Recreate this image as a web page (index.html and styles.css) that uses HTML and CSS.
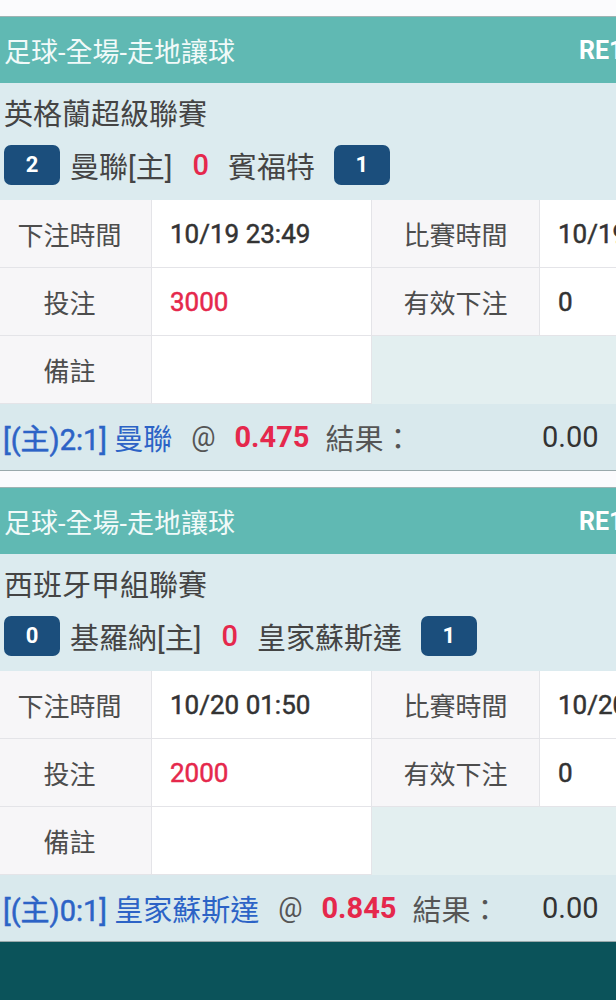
FILE: index.html
```html
<!DOCTYPE html>
<html>
<head>
    <meta charset="utf-8">
    <title>注單</title>
    <link rel="stylesheet" href="styles.css">
</head>
<body>
    <div class="page">
        <section class="card">
            <div class="card-head">
                <span class="title">足球-全場-走地讓球</span>
                <span class="ticket">RE1019234917</span>
            </div>
            <div class="match">
                <div class="league">英格蘭超級聯賽</div>
                <div class="teams">
                    <span class="badge">2</span>
                    <span class="team home">曼聯[主]</span>
                    <span class="score">0</span>
                    <span class="team away">賓福特</span>
                    <span class="badge">1</span>
                </div>
            </div>
            <div class="info">
                <div class="lbl">下注時間</div>
                <div class="val">10/19 23:49</div>
                <div class="lbl">比賽時間</div>
                <div class="val">10/19 23:30</div>

                <div class="lbl">投注</div>
                <div class="val red">3000</div>
                <div class="lbl">有效下注</div>
                <div class="val">0</div>

                <div class="lbl">備註</div>
                <div class="val"></div>
                <div class="empty"></div>
                <div class="empty"></div>
            </div>
            <div class="bet">
                <div class="bet-line">
                    <span class="pick"><b>[(主)2:1]</b> 曼聯</span>
                    <span class="at">@</span>
                    <span class="odds">0.475</span>
                    <span class="res-lbl">結果：</span>
                </div>
                <span class="result">0.00</span>
            </div>
        </section>

        <section class="card">
            <div class="card-head">
                <span class="title">足球-全場-走地讓球</span>
                <span class="ticket">RE1020015088</span>
            </div>
            <div class="match">
                <div class="league">西班牙甲組聯賽</div>
                <div class="teams">
                    <span class="badge">0</span>
                    <span class="team home">基羅納[主]</span>
                    <span class="score">0</span>
                    <span class="team away">皇家蘇斯達</span>
                    <span class="badge">1</span>
                </div>
            </div>
            <div class="info">
                <div class="lbl">下注時間</div>
                <div class="val">10/20 01:50</div>
                <div class="lbl">比賽時間</div>
                <div class="val">10/20 02:45</div>

                <div class="lbl">投注</div>
                <div class="val red">2000</div>
                <div class="lbl">有效下注</div>
                <div class="val">0</div>

                <div class="lbl">備註</div>
                <div class="val"></div>
                <div class="empty"></div>
                <div class="empty"></div>
            </div>
            <div class="bet">
                <div class="bet-line">
                    <span class="pick"><b>[(主)0:1]</b> 皇家蘇斯達</span>
                    <span class="at">@</span>
                    <span class="odds">0.845</span>
                    <span class="res-lbl">結果：</span>
                </div>
                <span class="result">0.00</span>
            </div>
        </section>

        <div class="bottom-bar"></div>
    </div>
</body>
</html>
```

FILE: styles.css
```css
body {
    margin: 0;
    background-color: #fbfbfd;
    font-family: Roboto, "Noto Sans CJK TC", sans-serif;
    color: #444;
}

.page {
    width: 616px;
    overflow: hidden;
}

.card {
    width: 760px;
    margin-top: 16px;
    border-top: 1px solid #9fb3b3;
    border-bottom: 1px solid #9aa9ab;
    background: #dcebef;
}

.card-head {
    display: grid;
    grid-template-columns: 575px auto;
    align-items: center;
    height: 66px;
    padding-left: 4px;
    background: #60b9b3;
    color: #f1faf9;
}

.title {
    font-size: 27px;
}

.ticket {
    font-size: 25px;
    font-weight: bold;
    color: #fff;
}

.match {
    height: 117px;
    box-sizing: border-box;
    padding: 12px 0 0 4px;
}

.league {
    font-size: 29px;
    line-height: 40px;
}

.teams {
    display: flex;
    align-items: center;
    margin-top: 10px;
    font-size: 29px;
    height: 40px;
}

.badge {
    width: 56px;
    height: 40px;
    line-height: 40px;
    border-radius: 7px;
    background: #1b4e7c;
    color: #fff;
    font-size: 22px;
    font-weight: bold;
    text-align: center;
}

.team.home {
    margin: 0 20px 0 10px;
}

.team.away {
    margin: 0 19px 0 19px;
}

.score {
    color: #e5284c;
    font-weight: 500;
}

.info {
    display: grid;
    grid-template-columns: 152px 220px 168px 220px;
    grid-auto-rows: 68px;
}

.lbl, .val {
    display: flex;
    align-items: center;
    box-sizing: border-box;
    border-right: 1px solid #e4e4e8;
    border-bottom: 1px solid #e4e4e8;
    font-size: 26px;
}

.lbl {
    justify-content: center;
    background: #f7f6f8;
    color: #4d4d4d;
}

.info .lbl:first-child,
.info .lbl:nth-child(5),
.info .lbl:nth-child(9) {
    padding-right: 12px;
}

.val {
    padding-left: 18px;
    background: #fff;
    color: #333;
    -webkit-text-stroke: 0.5px #333;
}

.val.red {
    color: #e5284c;
    -webkit-text-stroke: 0.5px #e5284c;
}

.empty {
    background: #e3eff0;
}

.bet {
    display: flex;
    align-items: center;
    height: 66px;
    padding-left: 3px;
    background: #d9e9ed;
    font-size: 29px;
}

.bet-line {
    display: flex;
    align-items: center;
    gap: 19px;
    width: 539px;
}

.pick {
    color: #2c63c6;
}

.pick b {
    font-weight: normal;
    -webkit-text-stroke: 0.5px #2c63c6;
}

.at, .res-lbl {
    color: #555;
}

.at {
    font-size: 27px;
}

.res-lbl {
    margin-left: -3px;
}

.odds {
    color: #e5284c;
    font-weight: bold;
}

.result {
    color: #333;
}

.bottom-bar {
    height: 60px;
    background: #0b535a;
}
```
